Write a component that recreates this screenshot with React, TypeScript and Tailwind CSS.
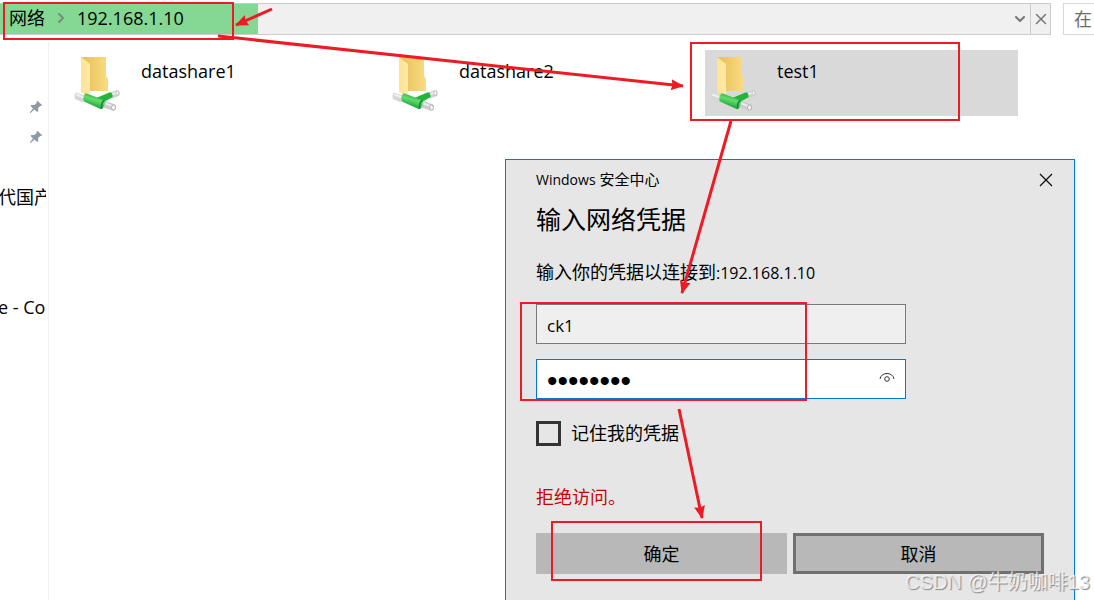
import React, { useId, useState } from 'react';
import { ChevronDown, ChevronRight, X } from 'lucide-react';

const shares = [
  { name: 'datashare1', selected: false },
  { name: 'datashare2', selected: false },
  { name: 'test1', selected: true },
];

const FolderIcon = () => {
  const id = useId();

  return (
    <svg className="h-[60px] w-12 shrink-0" viewBox="0 0 48 60" fill="none" aria-hidden="true">
      <defs>
        <linearGradient id={`${id}back`} x1="14" y1="0" x2="35" y2="0" gradientUnits="userSpaceOnUse">
          <stop stopColor="#e9c562" />
          <stop offset="1" stopColor="#fbdc80" />
        </linearGradient>
        <linearGradient id={`${id}front`} x1="8" y1="0" x2="17" y2="0" gradientUnits="userSpaceOnUse">
          <stop stopColor="#ffe394" />
          <stop offset="1" stopColor="#ffe9a9" />
        </linearGradient>
        <linearGradient id={`${id}pipe`} x1="22" y1="42" x2="19" y2="52" gradientUnits="userSpaceOnUse">
          <stop stopColor="#3cba4c" />
          <stop offset="0.35" stopColor="#62dd6c" />
          <stop offset="1" stopColor="#22a83a" />
        </linearGradient>
      </defs>
      <path d="M8 3h25v19l2 3v12H12z" fill={`url(#${id}back)`} />
      <path d="M8 3l9 7v30l-3 2-6-4z" fill={`url(#${id}front)`} />
      <path d="M3 38.500l9 3-2 7-8-3.500c-1-2-.5-5 1-6.500z" fill="#d6d6d6" />
      <path d="M3.500 39.500l8 3-.5 2-8-3z" fill="#f1f1f1" />
      <path d="M37.500 38.500l7-2.500c2 .5 3 4 1.500 6l-7 2.500z" fill="#cfcfcf" />
      <path d="M38.500 39.500l5-2 .5 2-5 2z" fill="#ededed" />
      <ellipse cx="44.500" cy="39" rx="1.500" ry="2.200" stroke="#bdbdbd" strokeWidth="0.800" fill="#f4f4f4" />
      <path d="M22 44.500l15-6.300c2 .3 3 2.800 2.500 5L31 48z" fill="#22b43b" />
      <path d="M32 46.500l10 4c2 1.500 1 5.500-1.500 6.300L30 53.500z" fill="#cdcdcd" />
      <path d="M33 48.500l7 3-.7 1.500-7-2.500z" fill="#ededed" />
      <path d="M13 39.200l18 6.800c2 2.500 0 8-3 9.200L11 47.500c-1.500-3-.5-7 2-8.300z" fill={`url(#${id}pipe)`} />
      <path d="M31.500 46.500c-2.500 1.500-3.500 5-2.500 8.300" stroke="#138050" strokeWidth="1.500" />
      <ellipse cx="40.500" cy="53.500" rx="2" ry="2.700" fill="#f4f4f4" stroke="#b0b0b0" />
    </svg>
  );
};

const PinIcon = () => (
  <svg className="h-[14px] w-[14px]" viewBox="0 0 14 14" fill="#8d99a4" aria-hidden="true">
    <path d="M8.5 1l4.5 4-.8 1-1-.1-2.1 2.2.2 3-1.1.9-2.8-2.6L1.6 13l-.8-.6 3.2-4L1.5 6l.9-1.1 3 .1 2.3-2-.2-1.200z" />
  </svg>
);

const RevealIcon = () => (
  <svg className="h-4 w-4" viewBox="0 0 16 16" fill="none" stroke="#333" aria-hidden="true">
    <path d="M1 8C1.500 4.500 4.500 2.500 8 2.500S14.500 4.500 15 8" />
    <circle cx="8" cy="8" r="2.300" />
  </svg>
);

const AddressBar = () => {
  const [progress] = useState(258);

  return (
    <header className="flex h-[35px] gap-3 pt-[3px]">
      <div className="relative flex flex-1 items-center border-y border-r border-[#ccc] bg-[#f0f0f0]">
        <div className="absolute inset-y-0 left-0 bg-[#84d893]" style={{ width: progress }} />
        <nav className="relative flex flex-1 items-center pb-[2px] pl-[9px] text-[18px] leading-6" aria-label="地址">
          <a href="#network">网络</a>
          <ChevronRight className="mx-2 h-4 w-4 text-[#7b8b7e]" strokeWidth={3} />
          <a href="#host">192.168.1.10</a>
        </nav>
        <button className="flex h-full w-5 items-center justify-center text-[#777]" aria-label="以前的位置">
          <ChevronDown className="h-4 w-4 shrink-0" strokeWidth={3} />
        </button>
        <button className="flex h-full w-5 items-center justify-center border-l border-[#ccc] text-[#777]" aria-label="停止加载">
          <X className="h-[18px] w-[18px] shrink-0" />
        </button>
      </div>
      <div className="w-[31px] overflow-hidden border-y border-l border-[#d9d9d9] bg-white">
        <input
          className="h-full w-40 pl-[10px] text-[18px] outline-none placeholder:text-[#6d6d6d]"
          placeholder="在"
          aria-label="搜索"
        />
      </div>
    </header>
  );
};

const Sidebar = () => (
  <aside className="w-[49px] shrink-0 border-r border-[#f0f0f0] pr-[2px] text-[18px] leading-6">
    <div className="flex flex-col items-end gap-4 pt-[58px] pr-[3px]">
      <PinIcon />
      <PinIcon />
    </div>
    <div className="mt-[41px] -ml-[2px] overflow-hidden whitespace-nowrap">代国产</div>
    <div className="mt-[86px] -ml-[2px] overflow-hidden whitespace-nowrap">e - Co</div>
  </aside>
);

const CredentialDialog = () => {
  const [user, setUser] = useState('ck1');
  const [password, setPassword] = useState('password');
  const [visible, setVisible] = useState(false);
  const [remember, setRemember] = useState(false);

  return (
    <section
      role="dialog"
      aria-labelledby="dialog-title"
      className="absolute top-[159px] right-[19px] -bottom-5 w-[570px] border border-[#0078d7] bg-[#e6e6e6] px-[30px] pt-[10px] text-[18px]"
    >
      <div className="flex h-5 items-center justify-between">
        <div className="pb-[2px] text-[15px] leading-5">
          <span className="text-[14px]">Windows</span> 安全中心
        </div>
        <button className="-mr-[17px] flex h-5 w-[30px] items-center justify-center" aria-label="关闭">
          <svg className="h-[14px] w-[14px]" viewBox="0 0 14 14" stroke="#111" strokeWidth="1.300" aria-hidden="true">
            <path d="M1 1l12 12M13 1L1 13" />
          </svg>
        </button>
      </div>
      <h1 id="dialog-title" className="mt-[11px] text-[25px] leading-9">
        输入网络凭据
      </h1>
      <p className="mt-[25px] leading-5">
        输入你的凭据以连接到<span className="text-[16px]">:192.168.1.10</span>
      </p>

      <div className="mt-[21px] w-[370px] space-y-[15px]">
        <input
          className="block h-10 w-full border border-[#7a7a7a] bg-[#efefef] px-[10px] pt-[2px] text-[17px] outline-none"
          aria-label="用户名"
          value={user}
          onChange={(e) => setUser(e.target.value)}
        />
        <div className="flex h-10 items-center border border-[#0078d7] bg-white pr-[10px]">
          <input
            type={visible ? 'text' : 'password'}
            className={`h-full min-w-0 flex-1 px-[10px] outline-none ${
              visible ? 'text-[17px]' : "pt-1 font-['Liberation_Sans',sans-serif] text-[30px]"
            }`}
            aria-label="密码"
            value={password}
            onChange={(e) => setPassword(e.target.value)}
          />
          <button onClick={() => setVisible(!visible)} aria-label="显示密码">
            <RevealIcon />
          </button>
        </div>
      </div>

      <label className="mt-[22px] flex h-[25px] items-center gap-[10px]">
        <input
          type="checkbox"
          className="h-[25px] w-[25px] appearance-none border-3 border-[#333] bg-[#e6e6e6] checked:bg-[#333]"
          checked={remember}
          onChange={(e) => setRemember(e.target.checked)}
        />
        记住我的凭据
      </label>

      <p className="mt-[41px] leading-5 text-[#c50500]">拒绝访问。</p>

      <div className="mt-[26px] grid grid-cols-2 gap-[6px]">
        <button className="h-[41px] bg-[#b8b8b8] pt-[2px]">确定</button>
        <button className="h-[41px] border-3 border-[#707070] bg-[#b8b8b8] pt-[2px]">取消</button>
      </div>
    </section>
  );
};

const Annotations = () => (
  <svg className="pointer-events-none absolute top-0 left-0 h-[600px] w-[1094px]" viewBox="0 0 1094 600" fill="none" stroke="#ed1c24" aria-hidden="true">
    <defs>
      <marker id="head" markerUnits="userSpaceOnUse" markerWidth="14" markerHeight="12" refX="12" refY="6" orient="auto">
        <path d="M0 .5l13 5.500-13 5.500 1.500-5.500z" fill="#ed1c24" stroke="none" />
      </marker>
    </defs>
    <g strokeWidth="2">
      <rect x="4" y="3" width="229" height="36" />
      <rect x="691" y="43" width="268" height="77" />
      <rect x="521" y="303" width="285" height="97" />
      <rect x="552" y="522" width="209" height="58" />
    </g>
    <g strokeWidth="3">
      <path d="M272 9L236 25" markerEnd="url(#head)" />
      <path d="M218 36L683 86" markerEnd="url(#head)" />
      <path d="M731 121L682 293" markerEnd="url(#head)" />
      <path d="M679 409L702 518" markerEnd="url(#head)" />
    </g>
  </svg>
);

const App: React.FC = () => {
  return (
    <div className="relative flex h-screen flex-col overflow-hidden bg-white font-['Open_Sans','Noto_Sans_CJK_SC',sans-serif] text-black">
      <AddressBar />

      <div className="flex flex-1 pt-[7px]">
        <Sidebar />
        <main className="flex-1 pt-2 pr-[76px] pl-5">
          <ul className="grid grid-cols-3 gap-[5px]">
            {shares.map((share) => (
              <li
                key={share.name}
                className={`flex h-[66px] gap-5 pt-1 pl-1 text-[18px] leading-[34px] ${share.selected ? 'bg-[#d9d9d9]' : ''}`}
              >
                <FolderIcon />
                <span>{share.name}</span>
              </li>
            ))}
          </ul>
        </main>
      </div>

      <CredentialDialog />
      <Annotations />

      <div className="absolute right-1 bottom-1 font-['Liberation_Sans','Noto_Sans_CJK_SC',sans-serif] text-[20px] leading-7 text-white/70 [text-shadow:1px_1px_1px_#888]">
        CSDN @牛奶咖啡13
      </div>
    </div>
  );
};

export default App;
